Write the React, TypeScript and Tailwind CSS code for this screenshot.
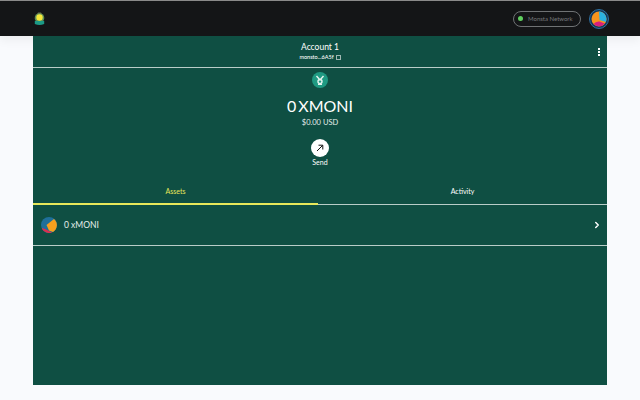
import React from 'react';
import { ChevronRight } from 'lucide-react';

const Logo = () => (
  <svg width="11" height="14" viewBox="0 0 11 14">
    <path d="M3 2.5 L4 0.5 H7 L8 2.5 Z" fill="#6b6f4a" />
    <circle cx="5.5" cy="6" r="4.8" fill="#5f8f5a" />
    <circle cx="5.5" cy="5.5" r="3.2" fill="#f3e63a" />
    <path d="M0.8 9 H10.2 V12 Q5.5 14 0.8 12 Z" fill="#1c9a86" />
  </svg>
);

const NetworkAvatar = () => (
  <svg width="20" height="20" viewBox="0 0 20 20">
    <circle cx="10" cy="10" r="9.5" fill="#12365a" stroke="#2f6f9f" strokeWidth="1" />
    <circle cx="10" cy="10" r="7.5" fill="#f7941d" />
    <path d="M10 2.5 A7.5 7.5 0 0 1 16.8 13 L10.5 11 Z" fill="#2cb1e0" />
    <path d="M4.5 15 Q7 12 10.5 12.5 L15.8 14.5 A7.5 7.5 0 0 1 4.5 15 Z" fill="#d81f7f" />
  </svg>
);

const TokenAvatar = () => (
  <svg width="16" height="16" viewBox="0 0 16 16">
    <circle cx="8" cy="8" r="8" fill="#1f6f99" />
    <path d="M1 11 Q5 12 8 14 L11 15.4 A8 8 0 0 1 1 12 Z" fill="#d8304f" />
    <path d="M13 2 A8 8 0 0 1 12 15 L8 13.5 L5.5 8 Z" fill="#f7a01d" />
  </svg>
);

const CoinIcon = () => (
  <div className="w-4 h-4 rounded-full bg-[#1f9a82] flex items-center justify-center">
    <svg width="10" height="10" viewBox="0 0 10 10" fill="none" stroke="#e6f5f0" strokeWidth="1.4">
      <path d="M1.5 1 L5 5 L8.5 1" />
      <circle cx="5" cy="6.5" r="2" />
      <path d="M3 9.5 H7" />
    </svg>
  </div>
);

export default function App() {
  return (
    <div className="h-[400px] w-[640px] overflow-hidden bg-[#f9fafd] font-['Lato',sans-serif] text-white flex flex-col">
      {/* Navbar */}
      <div className="relative h-[36px] shrink-0 bg-[#141517] border-t border-[#8a8a8a] shadow-[0_4px_10px_rgba(0,0,0,0.06)] flex items-center justify-between pl-[34px] pr-[31px]">
        <Logo />
        <div className="flex items-center gap-2">
          <div className="h-[16px] w-[68px] rounded-full border border-[#6f7274] flex items-center pl-[4px] gap-[5px] text-[6px] text-[#77797b] whitespace-nowrap">
            <span className="w-[5px] h-[5px] rounded-full bg-[#5fcf5f]" />
            Monsta Network
          </div>
          <NetworkAvatar />
        </div>
      </div>

      {/* Wallet panel */}
      <div className="relative mx-[33px] h-[349px] bg-[#0f4f43] flex flex-col">
        <div className="relative h-[32px] shrink-0 border-b border-[#b9cdc8] flex flex-col items-center pt-[6px]">
          <div className="text-[8.5px] leading-[11px] font-normal">Account 1</div>
          <div className="flex items-center gap-[2px] text-[5.5px] leading-[9px] font-medium">
            monsto...6A5f
            <span className="w-[5px] h-[5px] border border-[#9fb8b2]" />
          </div>
          <div className="absolute right-[7px] top-[12px] flex flex-col gap-[1px]">
            <span className="w-[2px] h-[2px] bg-white" />
            <span className="w-[2px] h-[2px] bg-white" />
            <span className="w-[2px] h-[2px] bg-white" />
          </div>
        </div>

        <div className="flex flex-col items-center pt-[4px]">
          <CoinIcon />
          <div className="mt-[8px] text-[16px] leading-[20px] font-normal [word-spacing:-2px]">0 XMONI</div>
          <div className="text-[7.5px] leading-[13px] text-[#e4eeeb]">$0.00 USD</div>
          <div className="mt-[10px] w-[18px] h-[18px] rounded-full bg-white flex items-center justify-center">
            <svg width="10" height="10" viewBox="0 0 10 10" fill="none" stroke="#111" strokeWidth="1">
              <path d="M2 8 L7.5 2.5 M3.5 2.2 H7.8 V6.5" />
            </svg>
          </div>
          <div className="text-[7px] leading-[10px]">Send</div>
        </div>

        {/* Tabs */}
        <div className="mt-[16px] flex h-[22px] shrink-0 border-b border-[#b9cdc8] text-[7px]">
          <div className="w-[285px] h-[22px] border-b-2 border-[#e8e85a] text-[#e8e85a] flex justify-center pt-[3px]">Assets</div>
          <div className="flex-1 flex justify-center pt-[3px]">Activity</div>
        </div>

        {/* Asset row */}
        <div className="h-[41px] shrink-0 border-b border-[#b9cdc8] flex items-center pl-[8px] pr-[5px]">
          <TokenAvatar />
          <span className="ml-[7px] text-[8.5px] text-[#e4eeeb]">0 xMONI</span>
          <ChevronRight className="ml-auto w-[10px] h-[10px] text-white" strokeWidth={3.5} />
        </div>
      </div>
    </div>
  );
}
